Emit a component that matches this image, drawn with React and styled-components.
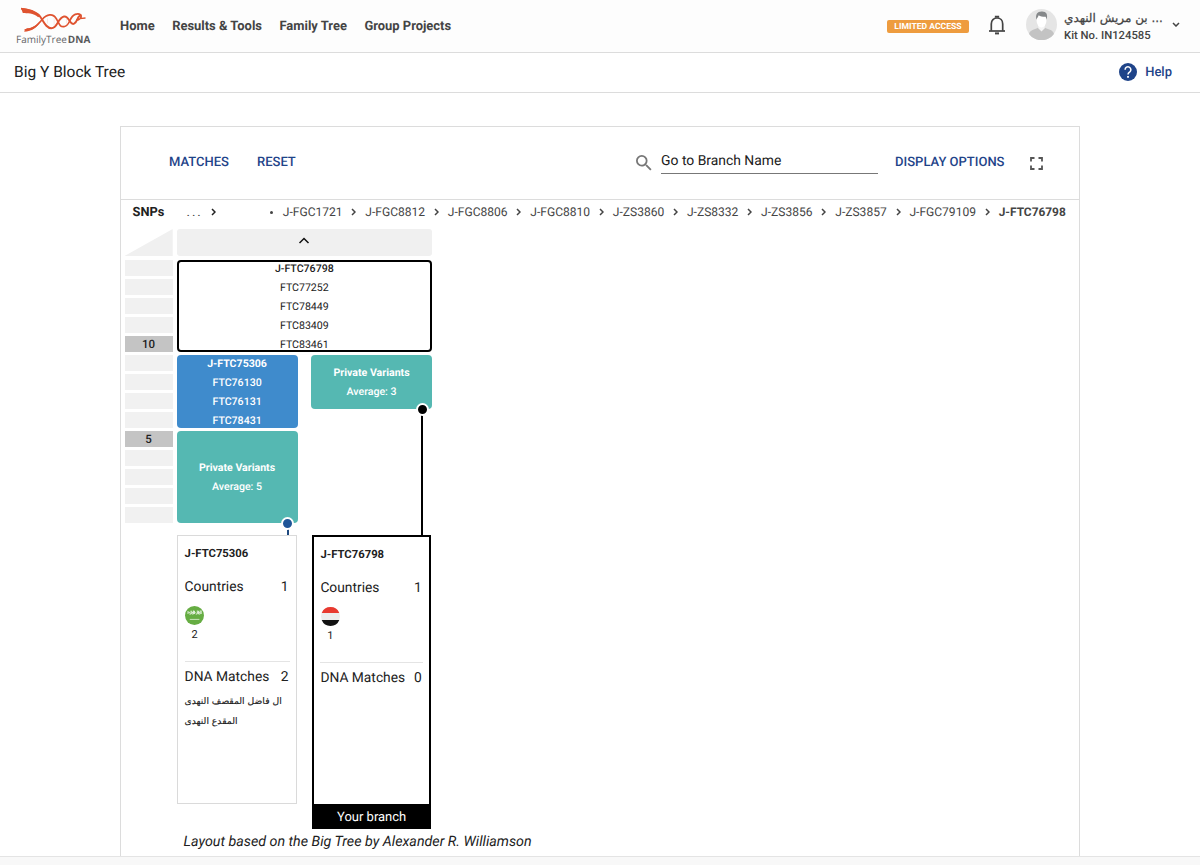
import React from "react";
import styled, { createGlobalStyle } from "styled-components";

const GlobalStyle = createGlobalStyle`
  * {
    box-sizing: border-box;
  }
  body {
    margin: 0;
    background: #fff;
    color: #212121;
    font-family: Roboto, "DejaVu Sans", sans-serif;
    font-size: 13px;
    text-rendering: geometricPrecision;
    overflow: hidden;
  }
`;

const Page = styled.div`
  display: flex;
  flex-direction: column;
  width: 1200px;
  height: 865px;
`;

const Header = styled.header`
  display: flex;
  align-items: center;
  flex: none;
  height: 53px;
  padding: 0 20px 0 15px;
  background: #fdfdfd;
  border-bottom: 1px solid #dcdcdc;
`;

const Brand = styled.div`
  width: 77px;
  height: 42px;
  margin-right: 28px;
`;

const BrandName = styled.div`
  margin: -1px 0 0 1px;
  color: #66676a;
  font-family: "Open Sans", sans-serif;
  font-size: 10px;
  line-height: 11px;
  white-space: nowrap;

  b {
    color: #58595b;
    margin-left: 1px;
  }
`;

const Nav = styled.nav`
  display: flex;
  gap: 17.5px;
  flex: 1;
  color: #444;
  font-size: 12.95px;
  font-weight: 700;
`;

const AccessBadge = styled.span`
  width: 82px;
  height: 13px;
  border-radius: 2px;
  background: #ee9c3f;
  color: #fff;
  font-size: 8.6px;
  font-weight: 700;
  line-height: 14px;
  text-align: center;
`;

const BellButton = styled.span`
  display: flex;
  margin: 0 20px 2px 19px;
`;

const Profile = styled.div`
  display: flex;
  align-items: center;
  margin-top: -4px;
`;

const ProfileText = styled.div`
  width: 99px;
  margin: 6px 9px 0 7px;
  color: #444;
  font-size: 11.3px;
  font-weight: 500;
  line-height: 17px;
  white-space: nowrap;
`;

const ProfileName = styled.div`
  font-family: "DejaVu Sans", sans-serif;
  font-size: 12px;
  font-weight: 400;
  -webkit-text-stroke: 0.25px #444;
`;

const TitleBar = styled.div`
  display: flex;
  align-items: center;
  justify-content: space-between;
  flex: none;
  height: 40px;
  padding: 0 28px 2px 14px;
  border-bottom: 1px solid #dcdcdc;
  font-size: 15.5px;
`;

const HelpLink = styled.span`
  display: flex;
  align-items: center;
  gap: 8px;
  color: #1f4489;
  font-size: 13px;
  font-weight: 500;
`;

const HelpText = styled.span`
  padding-top: 2px;
`;

const Panel = styled.main`
  display: flex;
  flex-direction: column;
  flex: none;
  width: 960px;
  height: 730px;
  margin: 33px 0 0 120px;
  border: 1px solid #dcdcdc;
  border-bottom: 0;
`;

const Toolbar = styled.div`
  display: flex;
  align-items: center;
  flex: none;
  height: 73px;
  padding: 0 36.5px 0 48px;
  border-bottom: 1px solid #dcdcdc;
`;

const ToolbarButton = styled.span`
  margin-right: ${props => props.$gap || 0}px;
  padding-bottom: 0.5px;
  color: #1f4489;
  font-size: 13px;
  font-weight: 500;
  line-height: 15px;
  white-space: nowrap;
`;

const Search = styled.div`
  display: flex;
  align-items: center;
  margin: 0 17.5px 0 auto;
`;

const SearchField = styled.div`
  width: 216.5px;
  height: 25px;
  margin: -3px 0 0 9px;
  border-bottom: 1px solid #777;
  font-size: 13.9px;
  line-height: 24px;
`;

const Breadcrumbs = styled.div`
  display: flex;
  align-items: center;
  flex: none;
  height: 25px;
  padding: 0 13px 1px 11.5px;
  color: #444;
  font-size: 12px;
  white-space: nowrap;
`;

const SnpLabel = styled.span`
  width: 54px;
  color: #212121;
  font-size: 12.8px;
  font-weight: 700;
`;

const Ellipsis = styled.span`
  margin-right: 8px;
  font-size: 13px;
  letter-spacing: 2px;
`;

const Crumbs = styled.div`
  display: flex;
  align-items: center;
  justify-content: space-between;
  width: 796px;
  margin-left: auto;
`;

const Bullet = styled.span`
  width: 3px;
  height: 3px;
  margin-right: 1px;
  border-radius: 50%;
  background: #444;
`;

const Crumb = styled.span`
  font-size: ${props => (props.$current ? 11.9 : 12.05)}px;
  font-weight: ${props => (props.$current ? 700 : 400)};
`;

const Tree = styled.div`
  display: flex;
  align-items: flex-start;
  gap: 3.9px;
  padding: 4px 0 0 3.5px;
`;

const Ruler = styled.div`
  display: flex;
  flex-direction: column;
  gap: 3px;
  width: 48.2px;
`;

const RulerCorner = styled.div`
  height: 27px;
  margin-bottom: 1px;
  background: #f0f0f0;
  clip-path: polygon(100% 0, 100% 100%, 0 100%);
`;

const RulerCell = styled.div`
  height: 16px;
  background: ${props => (props.$marked ? "#c4c4c4" : "#f1f1f1")};
  font-size: 11.5px;
  font-weight: 500;
  line-height: 16px;
  text-align: center;
`;

const Blocks = styled.div`
  display: flex;
  flex-direction: column;
  width: 255.5px;
`;

const CollapseBar = styled.div`
  display: flex;
  align-items: center;
  justify-content: center;
  height: 27px;
  margin-bottom: 4px;
  padding-bottom: 4px;
  border-radius: 3px;
  background: #f0f0f0;
`;

const Block = styled.div`
  position: relative;
  display: flex;
  flex-direction: column;
  justify-content: center;
  height: ${props => props.$rows * 19 - 3}px;
  margin-bottom: 3px;
  border: ${props => (props.$outlined ? "2px solid #000" : "0")};
  border-radius: 4px;
  background: ${props => props.$color || "#fff"};
  color: ${props => (props.$color ? "#fff" : "#212121")};
  font-size: 10.6px;
  font-weight: ${props => (props.$color ? 500 : 400)};
  line-height: 19px;
  text-align: center;

  b {
    font-weight: ${props => (props.$color ? 700 : 500)};
  }
`;

const Branches = styled.div`
  display: flex;
  justify-content: space-between;
`;

const Branch = styled.div`
  display: flex;
  flex-direction: column;
  width: 121px;
`;

// runs from the private variants block down to the branch card
const Connector = styled.div`
  flex: none;
  align-self: flex-end;
  width: 2px;
  height: ${props => props.$length}px;
  margin: 0 9px 0 0;
  background: ${props => props.$color};
`;

const Dot = styled.span`
  position: absolute;
  right: 3.5px;
  bottom: -7px;
  width: 13px;
  height: 13px;
  border: 2px solid #fff;
  border-radius: 50%;
  background: ${props => props.$color};
`;

const Card = styled.div`
  display: flex;
  flex-direction: column;
  width: ${props => (props.$own ? 119.5 : 120)}px;
  height: ${props => (props.$own ? 294 : 269)}px;
  margin-left: ${props => (props.$own ? 0.8 : 0.5)}px;
  padding: 8px 6px 0 6.5px;
  border: ${props => (props.$own ? "2px solid #000" : "1px solid #dadada")};
`;

const CardTitle = styled.div`
  height: 18px;
  font-size: 11.3px;
  font-weight: 700;
  line-height: 19px;
`;

const CardRow = styled.div`
  display: flex;
  justify-content: space-between;
  padding-right: 1.5px;
  font-size: 13.8px;
  line-height: 20px;
`;

const Countries = styled.div`
  height: 85px;
  margin: 15px 0 5px;
  border-bottom: 1px solid #e4e4e4;
`;

const Flag = styled.div`
  display: flex;
  flex-direction: column;
  align-items: center;
  width: 19px;
  margin: 9px 0 0 0.5px;
  font-size: 11px;
  line-height: 19px;
`;

const MatchName = styled.div`
  margin-top: ${props => (props.$first ? 5 : 0)}px;
  font-family: "DejaVu Sans", sans-serif;
  font-size: 9.2px;
  line-height: 20px;
  white-space: nowrap;
  -webkit-text-stroke: 0.15px #212121;
`;

const YourBranch = styled.div`
  height: 23px;
  margin: auto -6px 0 -6.5px;
  background: #000;
  color: #fff;
  font-size: 13px;
  line-height: 28px;
  text-align: center;
`;

const Credit = styled.div`
  margin: 4px 0 0 7px;
  font-size: 14.27px;
  font-style: italic;
  line-height: 19px;
  white-space: nowrap;
`;

const Footer = styled.footer`
  flex: 1;
  border-top: 1px solid #e4e4e4;
  background: #f8f8f8;
`;

const LogoSvg = styled.svg`
  display: block;
`;

const Logo = () => (
  <LogoSvg width="77" height="30" viewBox="15 4 77 30" fill="none">
    <path
      d="M21 7.6C28 8.4 34 9.4 38.6 13.7C43 18 45 27.3 51.3 27.3C58 27.3 57.5 16.7 64 15.5C69.5 14.5 69.8 25 74 22.7C78.3 20.2 76.8 14.5 81.3 14.3"
      stroke="#df5330"
      strokeWidth="1.9"
    />
    <path
      d="M24.5 29C33.5 28.7 37.5 24 42 18.7C46.8 13 53 12 56.5 18C59.5 23.4 60 26.5 64.6 25.5C70.5 24.3 69 15.6 75.2 13.4C79.7 11.8 82.8 14.5 80.2 17.5C77.2 20.5 73 18 85.5 17"
      stroke="#df5330"
      strokeWidth="1.7"
    />
    <path d="M21 7C29 7.6 36 10 39.7 15.2L38.2 16.3C33.4 11.4 27 12.7 22.8 12Z" fill="#df5330" />
    <path d="M24 30.8L26.8 27.3C33 27.2 37 23.7 40 20.2C37.4 26.9 31.8 30.1 24 30.8Z" fill="#df5330" />
    <path
      d="M47.5 17.5V22.5M54.2 17V24.6M66.6 17.5V22.5"
      stroke="#f6d2c8"
      strokeWidth=".5"
    />
  </LogoSvg>
);

const Bell = () => (
  <svg width="18" height="20" viewBox="0 0 18 20" fill="none" stroke="#444" strokeWidth="1.7">
    <path d="M3.3 15.8V8.9C3.3 5.3 5.7 3 9 3s5.7 2.3 5.7 5.9v6.9" />
    <path d="M1 16H17" />
    <path d="M7.7 2.8V1.7h2.6v1.1" />
    <path d="M7 18.4H11" strokeWidth="2" />
  </svg>
);

const Avatar = () => (
  <svg width="31" height="31" viewBox="0 0 31 31">
    <circle cx="15.5" cy="15.5" r="15.5" fill="#e5e5e5" />
    <path d="M3 24.9C4.3 20.5 9.5 20.6 12.2 18.6H18.8C21.6 20.6 26.6 20.4 28 24.9A15.5 15.5 0 0 1 3 24.9Z" fill="#c3c3c3" />
    <path d="M12.2 15h6.6v4.2L15.5 22.5L12.2 19.2Z" fill="#f4f4f4" />
    <ellipse cx="15.5" cy="11.8" rx="4.9" ry="6.8" fill="#fff" />
    <path d="M10.4 10.6C9.2 5.3 11.5 2.5 15.7 2.6C20.3 2.4 22 5.4 20.7 10.6L19.8 7.8C17 7.9 14.4 7.4 12.6 6.2C12.4 7.8 11.2 8.3 10.4 10.6Z" fill="#85888a" />
  </svg>
);

const HelpIcon = () => (
  <svg width="18" height="18" viewBox="2 2 20 20">
    <circle cx="12" cy="12" r="10" fill="#1f4489" />
    <path d="M8.8 9.4a3.2 3.2 0 1 1 5.2 2.5c-1.2.9-2 1.5-2 3" fill="none" stroke="#fff" strokeWidth="1.7" />
    <rect x="11" y="16.4" width="2" height="2" fill="#fff" />
  </svg>
);

const SearchIcon = () => (
  <svg width="16" height="16" viewBox="3 3 18 18">
    <path
      fill="#777"
      d="M15.5 14h-.79l-.28-.27A6.47 6.47 0 0 0 16 9.5 6.5 6.5 0 1 0 9.5 16c1.61 0 3.09-.59 4.23-1.57l.27.28v.79l5 4.99L20.49 19l-4.99-5zm-6 0C7.01 14 5 11.99 5 9.5S7.01 5 9.5 5 14 7.01 14 9.5 11.99 14 9.5 14z"
    />
  </svg>
);

const FullscreenIcon = () => (
  <svg width="13" height="13" viewBox="0 0 13 13" fill="none" stroke="#555" strokeWidth="1.8">
    <path d="M1 4.5V1H4.5M8.5 1H12V4.5M12 8.5V12H8.5M4.5 12H1V8.5" />
  </svg>
);

const Chevron = ({ width = 5, height = 8, d = "M1 1L4 4L1 7", color = "#444" }) => (
  <svg width={width} height={height} viewBox={`0 0 ${width} ${height}`} fill="none" stroke={color} strokeWidth="1.5">
    <path d={d} />
  </svg>
);

const SaudiFlag = () => (
  <svg width="19" height="19" viewBox="0 0 19 19">
    <circle cx="9.5" cy="9.5" r="9.5" fill="#66ad43" />
    <path
      d="M3 8V5M4.3 8H6V4.7M6.8 4.8V8H8.5V4.5M9.5 8V4.8M10.7 8H12.3V4.5M13.5 4.8V8H15.2V4.5M16.2 4.5V8M3.4 6.4H5M7 6.5H10.6M12 6.4H15"
      stroke="#dcedd4"
      strokeWidth="1"
      fill="none"
    />
    <path d="M4.8 13.4H14.4" stroke="#d3e8c9" strokeWidth=".9" />
  </svg>
);

const YemenFlag = () => (
  <svg width="19" height="19" viewBox="0 0 19 19">
    <circle cx="9.5" cy="9.5" r="9.5" fill="#ececec" />
    <path d="M.7 6A9.5 9.5 0 0 1 18.3 6Z" fill="#e8392f" />
    <path d="M.7 13A9.5 9.5 0 0 0 18.3 13Z" fill="#111" />
  </svg>
);

const NAV = ["Home", "Results & Tools", "Family Tree", "Group Projects"];

const CRUMBS = [
  "J-FGC1721",
  "J-FGC8812",
  "J-FGC8806",
  "J-FGC8810",
  "J-ZS3860",
  "J-ZS8332",
  "J-ZS3856",
  "J-ZS3857",
  "J-FGC79109",
  "J-FTC76798",
];

const RULER = ["", "", "", "", "10", "", "", "", "", "5", "", "", "", ""];

const SnpBlock = ({ snps, ...props }) => (
  <Block $rows={snps.length} {...props}>
    {snps.map((snp, i) => (i === 0 ? <b key={snp}>{snp}</b> : <span key={snp}>{snp}</span>))}
  </Block>
);

const PrivateVariants = ({ average, dot }) => (
  <Block $rows={average} $color="#55b8b2">
    <b>Private Variants</b>
    <span>Average: {average}</span>
    <Dot $color={dot} />
  </Block>
);

const BranchCard = ({ name, flag, people, matches, own }) => (
  <Card $own={own}>
    <CardTitle>{name}</CardTitle>
    <Countries>
      <CardRow>
        <span>Countries</span>
        <span>1</span>
      </CardRow>
      <Flag>
        {flag}
        <span>{people}</span>
      </Flag>
    </Countries>
    <CardRow>
      <span>DNA Matches</span>
      <span>{matches.length}</span>
    </CardRow>
    {matches.map((match, i) => (
      <MatchName key={match} $first={i === 0}>
        {match}
      </MatchName>
    ))}
    {own && <YourBranch>Your branch</YourBranch>}
  </Card>
);

const App = () => (
  <Page>
    <GlobalStyle />
    <Header>
      <Brand>
        <Logo />
        <BrandName>
          FamilyTree<b>DNA</b>
        </BrandName>
      </Brand>
      <Nav>
        {NAV.map(item => (
          <span key={item}>{item}</span>
        ))}
      </Nav>
      <AccessBadge>LIMITED ACCESS</AccessBadge>
      <BellButton>
        <Bell />
      </BellButton>
      <Profile>
        <Avatar />
        <ProfileText>
          <ProfileName>بن مريش النهدي ...</ProfileName>
          Kit No. IN124585
        </ProfileText>
        <Chevron width={8} height={5} d="M1 1L4 4L7 1" />
      </Profile>
    </Header>
    <TitleBar>
      Big Y Block Tree
      <HelpLink>
        <HelpIcon />
        <HelpText>Help</HelpText>
      </HelpLink>
    </TitleBar>
    <Panel>
      <Toolbar>
        <ToolbarButton $gap={28}>MATCHES</ToolbarButton>
        <ToolbarButton>RESET</ToolbarButton>
        <Search>
          <SearchIcon />
          <SearchField>Go to Branch Name</SearchField>
        </Search>
        <ToolbarButton $gap={25}>DISPLAY OPTIONS</ToolbarButton>
        <FullscreenIcon />
      </Toolbar>
      <Breadcrumbs>
        <SnpLabel>SNPs</SnpLabel>
        <Ellipsis>...</Ellipsis>
        <Chevron color="#212121" />
        <Crumbs>
          <Bullet />
          {CRUMBS.map((crumb, i) => (
            <React.Fragment key={crumb}>
              {i > 0 && <Chevron />}
              <Crumb $current={i === CRUMBS.length - 1}>{crumb}</Crumb>
            </React.Fragment>
          ))}
        </Crumbs>
      </Breadcrumbs>
      <Tree>
        <Ruler>
          <RulerCorner />
          {RULER.map((mark, i) => (
            <RulerCell key={i} $marked={mark !== ""}>
              {mark}
            </RulerCell>
          ))}
        </Ruler>
        <Blocks>
          <CollapseBar>
            <Chevron width={12} height={7} d="M1.5 6L6 1.5L10.5 6" color="#111" />
          </CollapseBar>
          <SnpBlock $outlined snps={["J-FTC76798", "FTC77252", "FTC78449", "FTC83409", "FTC83461"]} />
          <Branches>
            <Branch>
              <SnpBlock $color="#3f8bcc" snps={["J-FTC75306", "FTC76130", "FTC76131", "FTC78431"]} />
              <PrivateVariants average={5} dot="#1f5597" />
              <Connector $length={9} $color="#1f4a80" />
              <BranchCard
                name="J-FTC75306"
                flag={<SaudiFlag />}
                people={2}
                matches={["ال فاضل المقصف النهدى", "المقدع النهدى"]}
              />
            </Branch>
            <Branch>
              <PrivateVariants average={3} dot="#000" />
              <Connector $length={123} $color="#000" />
              <BranchCard own name="J-FTC76798" flag={<YemenFlag />} people={1} matches={[]} />
            </Branch>
          </Branches>
          <Credit>Layout based on the Big Tree by Alexander R. Williamson</Credit>
        </Blocks>
      </Tree>
    </Panel>
    <Footer />
  </Page>
);

export default App;
